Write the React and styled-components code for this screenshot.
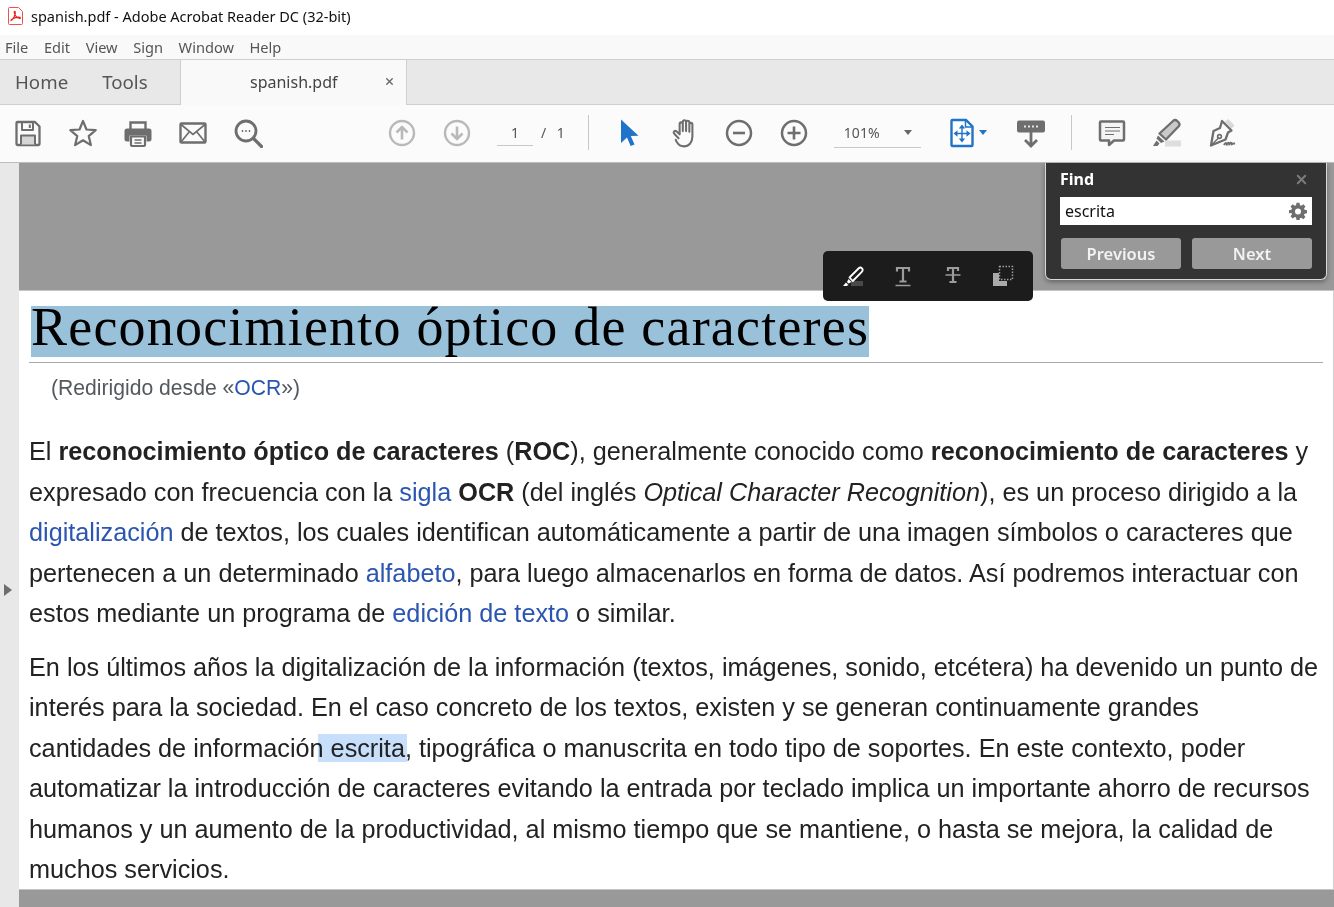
import React from 'react';
import styled, { createGlobalStyle } from 'styled-components';
import { X } from 'lucide-react';

const GlobalStyle = createGlobalStyle`
  html, body { margin: 0; padding: 0; height: 100%; overflow: hidden; background: #fff; }
  * { box-sizing: border-box; }
  #root { height: 100%; }
`;

const uiFont = `"Noto Sans", "Open Sans", "Liberation Sans", sans-serif`;

const Window = styled.div`
  width: 1334px;
  height: 907px;
  display: flex;
  flex-direction: column;
  overflow: hidden;
  position: relative;
  font-family: ${uiFont};
`;

const TitleBar = styled.div`
  height: 35px;
  flex: none;
  display: flex;
  align-items: center;
  gap: 7px;
  padding: 0 0 3px 8px;
  background: #fff;
  font-size: 14.5px;
  color: #111;
`;

const MenuBar = styled.div`
  height: 25px;
  flex: none;
  display: flex;
  align-items: center;
  gap: 15.6px;
  padding: 0 0 1px 5px;
  background: #f9f9f9;
  border-bottom: 1px solid #cfcfcf;
  font-size: 14.6px;
  color: #555;
`;

const TabBar = styled.div`
  height: 45px;
  flex: none;
  display: flex;
  background: #e8e8e8;
  border-bottom: 1px solid #cfcfcf;
`;

const NavTabs = styled.div`
  width: 180px;
  display: flex;
  align-items: center;
  gap: 34px;
  padding: 0 0 2px 15px;
  font-size: 18.7px;
  color: #555;
`;

const DocTab = styled.div`
  width: 227px;
  height: 45px;
  display: flex;
  align-items: center;
  padding: 0 0 2px 69px;
  gap: 46px;
  background: #f9f9f9;
  border-left: 1px solid #cfcfcf;
  border-right: 1px solid #cfcfcf;
  font-size: 16px;
  color: #444;
`;

const Toolbar = styled.div`
  height: 58px;
  flex: none;
  display: flex;
  align-items: center;
  padding-bottom: 2px;
  background: #fbfbfb;
  border-bottom: 1px solid #bdbdbd;
`;

const ToolGroup = styled.div`
  display: flex;
  align-items: center;
  gap: ${p => p.$gap || 0}px;
  margin-left: ${p => p.$left || 0}px;
`;

const Icon = styled.svg`
  width: ${p => p.$size || 30}px;
  height: ${p => p.$tall || p.$size || 30}px;
  flex: none;
  display: block;
`;

const PageField = styled.div`
  width: 36px;
  height: 26px;
  margin-left: 26px;
  display: flex;
  align-items: center;
  justify-content: center;
  border-bottom: 1px solid #c8c8c8;
  font-size: 14px;
  color: #555;
`;

const PageTotal = styled.div`
  margin-left: 8px;
  font-size: 14px;
  letter-spacing: 3px;
  word-spacing: 1px;
  color: #555;
  white-space: nowrap;
`;

const Divider = styled.div`
  width: 1px;
  height: 35px;
  background: #c8c8c8;
  margin-left: ${p => p.$left}px;
`;

const ZoomField = styled.div`
  width: 87px;
  height: 31px;
  margin-left: 25px;
  display: flex;
  align-items: center;
  justify-content: space-between;
  padding: 0 9px 0 10px;
  border-bottom: 1px solid #c8c8c8;
  font-size: 14px;
  color: #555;
`;

const Caret = styled.span`
  width: 0;
  height: 0;
  border-left: 4px solid transparent;
  border-right: 4px solid transparent;
  border-top: 5px solid ${p => p.$color || '#666'};
`;

const Workspace = styled.div`
  flex: 1;
  display: flex;
  min-height: 0;
`;

const SideRail = styled.div`
  width: 19px;
  flex: none;
  background: #e8e8e8;
  display: flex;
  align-items: center;
  padding-left: 4px;
`;

const RailArrow = styled.span`
  width: 0;
  height: 0;
  margin-top: 110px;
  border-top: 6px solid transparent;
  border-bottom: 6px solid transparent;
  border-left: 8px solid #6e6e6e;
`;

const Viewer = styled.div`
  flex: 1;
  display: flex;
  flex-direction: column;
  background: #999;
  padding-top: 127px;
`;

const Page = styled.div`
  height: 600px;
  background: #fff;
  border-top: 1px solid #c4c4c4;
  border-right: 1px solid #cfcfcf;
  border-bottom: 1px solid #c4c4c4;
  padding: 0 10px;
  font-family: "Liberation Sans", Arial, sans-serif;
  color: #222;
`;

const Heading = styled.h1`
  margin: 0;
  height: 72px;
  padding-top: 15px;
  border-bottom: 1px solid #a2a9b1;
  font-family: "Liberation Serif", "Times New Roman", serif;
  font-size: 54px;
  font-weight: 400;
  color: #000;
  white-space: nowrap;
`;

const TitleMark = styled.span`
  display: block;
  width: fit-content;
  margin-left: 2px;
  height: 51px;
  line-height: 43px;
  letter-spacing: 1.2px;
  background: #99c1da;
`;

const Redirect = styled.div`
  margin: 12px 0 0 22px;
  height: 26px;
  font-size: 21.15px;
  line-height: 26px;
  color: #54595d;
`;

const Paragraph = styled.p`
  margin: ${p => p.$top}px 0 0;
  font-size: 25.24px;
  line-height: 40.5px;
  white-space: nowrap;
`;

const WikiLink = styled.span`
  color: #2a55b0;
`;

const Hit = styled.span`
  background: #c8dffc;
  mix-blend-mode: multiply;
  margin: 0 -2px 0 -13px;
  padding: 0 2px 0 13px;
`;

const FindPanel = styled.div`
  position: absolute;
  left: 1045px;
  top: 163px;
  width: 282px;
  height: 117px;
  padding: 0 14px;
  background: #333;
  border: 1px solid #d8d8d8;
  border-top: none;
  border-radius: 0 0 6px 6px;
  box-shadow: 0 2px 5px rgba(0, 0, 0, 0.35);
  color: #fff;
`;

const FindHeader = styled.div`
  height: 34px;
  display: flex;
  align-items: center;
  justify-content: space-between;
  font-size: 16px;
  font-weight: 700;
  padding: 0 3px 2px 0;
`;

const FindInput = styled.div`
  height: 28px;
  display: flex;
  align-items: center;
  justify-content: space-between;
  padding: 0 5px;
  background: #fff;
  color: #111;
  font-size: 16px;
`;

const FindButtons = styled.div`
  display: flex;
  justify-content: space-between;
  margin-top: 13px;
  padding-left: 1px;
`;

const FindButton = styled.div`
  width: 120px;
  height: 31px;
  display: flex;
  align-items: center;
  justify-content: center;
  background: #999;
  border-radius: 3px;
  font-size: 16.5px;
  font-weight: 600;
  color: #f2f2f2;
`;

const SelectionBar = styled.div`
  position: absolute;
  left: 823px;
  top: 251px;
  width: 210px;
  height: 50px;
  display: flex;
  align-items: center;
  justify-content: space-between;
  padding: 0 15px;
  background: #1c1c1c;
  border-radius: 5px;
`;

const grey = '#6e6e6e';
const lite = '#b9b9b9';
const blue = '#1f73c9';
const dim = '#9c9c9c';

const AcrobatMark = () => (
  <Icon $size={16} $tall={18} viewBox="0 0 16 18">
    <path d="M1.500 .5h9l4 4v12a1 1 0 0 1-1 1h-12a1 1 0 0 1-1-1v-15a1 1 0 0 1 1-1z" fill="#fff" stroke="#f0504a" />
    <path d="M3 13.500c2-1 3.400-3.600 4.200-6.800.3-1.400-.1-2.600-.7-2.200-.6.5.1 2.600 1.200 4.400 1 1.500 2.300 2.500 3.800 2.500 1 0 1.200-.8.300-1-1.700-.4-5.400.5-7.500 1.700-1 .6-1.500 1.100-1.300 1.400z" fill="none" stroke="#e8231c" strokeWidth="1.200" />
  </Icon>
);

const SaveIcon = () => (
  <Icon viewBox="0 0 30 30" fill="none" stroke={grey} strokeWidth="2.300" strokeLinejoin="round">
    <path d="M3.500 5a1 1 0 0 1 1-1h17.500l4.500 4.500V26a1 1 0 0 1-1 1h-21a1 1 0 0 1-1-1z" />
    <path d="M9 4.500V12h11V4.500M16.800 6.500v3.500" strokeWidth="2" />
    <path d="M8 26.500V17.500h14v9" fill="#d6d6d6" strokeWidth="2" />
  </Icon>
);

const StarIcon = () => (
  <Icon viewBox="0 0 30 30" fill="none" stroke={grey} strokeWidth="2.200">
    <path d="M15 3l3.500 8.500 9.200.7-7 5.900 2.200 9-7.900-4.800-7.900 4.800 2.200-9-7-5.900 9.200-.7z" strokeLinejoin="round" />
  </Icon>
);

const PrintIcon = () => (
  <Icon viewBox="0 0 30 30">
    <path d="M7.500 11V4.500h15V11" fill="none" stroke={grey} strokeWidth="2.400" />
    <path d="M4 10.500h22a2.500 2.500 0 0 1 2.500 2.500v8a2.500 2.500 0 0 1-2.500 2.500h-2.500v-6h-17v6H4A2.500 2.500 0 0 1 1.500 21v-8A2.500 2.500 0 0 1 4 10.500z" fill={grey} />
    <path d="M8 18.500h14V27a1 1 0 0 1-1 1H9a1 1 0 0 1-1-1z" fill="none" stroke={grey} strokeWidth="2.200" />
    <path d="M11.500 22h7M11.500 25h7" stroke={grey} strokeWidth="1.300" />
  </Icon>
);

const MailIcon = () => (
  <Icon viewBox="0 0 30 30" fill="none" stroke={grey} strokeWidth="2.400">
    <rect x="2.500" y="5.500" width="25" height="19" rx="1" />
    <path d="M3 6.500L15 16.500 27 6.500M3 24L11.500 13.500M27 24L18.500 13.500" strokeWidth="1.700" />
  </Icon>
);

const SearchIcon = () => (
  <Icon viewBox="0 0 30 30" fill="none" stroke={grey} strokeWidth="2.800">
    <circle cx="13" cy="13" r="10" />
    <path d="M20.500 20.500l8 8" strokeWidth="3.200" strokeLinecap="round" />
    <path d="M8.800 13h1.400M12.300 13h1.400M15.800 13h1.400" strokeWidth="1.800" />
  </Icon>
);

const ArrowCircle = ({ down }) => (
  <Icon $size={28} viewBox="0 0 28 28" fill="none" stroke={lite} strokeWidth="2.400">
    <circle cx="14" cy="14" r="12" />
    {down
      ? <path d="M14 7.500v12M8.500 14.500l5.500 5.500 5.500-5.500" strokeWidth="2.600" />
      : <path d="M14 20.500v-12M8.500 13.500l5.500-5.500 5.500 5.500" strokeWidth="2.600" />}
  </Icon>
);

const ArrowCursor = () => (
  <Icon viewBox="0 0 30 30">
    <path d="M7 1.500v23.500l6-5.500 3.700 8.500 3.800-1.600-3.700-8.300 7.700-.4z" fill={blue} />
  </Icon>
);

const HandIcon = () => (
  <Icon viewBox="2.500 1 24 27.500" fill="none" stroke={grey} strokeWidth="1.900" strokeLinecap="round" strokeLinejoin="round">
    <path d="M9.500 19.500l-3.700-3.800c-1.900-1.700.3-3.800 2-2.300l2.700 2.600V6.500c0-2 2.900-2 2.900 0M13.400 13V4.500c0-2 3-2 3 0V13M16.400 13V5c0-2 3-2 3 0v8.500M19.400 13V7c0-2 2.800-2 2.800 0v11c0 5.500-3.300 9-7.800 9-3 0-5-1.500-6.500-4l-1-2" />
  </Icon>
);

const ZoomCircle = ({ plus }) => (
  <Icon viewBox="0 0 30 30" fill="none" stroke={grey} strokeWidth="2.500">
    <circle cx="15" cy="15" r="12" />
    <path d={plus ? 'M8.500 15h13M15 8.500v13' : 'M9 15h12'} strokeWidth="2.600" />
  </Icon>
);

const FitPageIcon = () => (
  <Icon $size={26} $tall={30} viewBox="0 0 26 30">
    <path d="M2.500 3a1 1 0 0 1 1-1h13.500l6.500 6.500V27a1 1 0 0 1-1 1h-19a1 1 0 0 1-1-1z" fill="#fff" stroke={blue} strokeWidth="2.400" />
    <path d="M16.500 2.500V9h6.500" fill="none" stroke={blue} strokeWidth="1.500" />
    <path d="M13 10v11M7.500 15.500h11" stroke={blue} strokeWidth="1.400" />
    <path d="M13 6.500l3.200 4h-6.400zM13 24.500l3.200-4h-6.400zM4.500 15.500l4-3.200v6.400zM21.500 15.500l-4-3.200v6.400z" fill={blue} />
  </Icon>
);

const ScrollModeIcon = () => (
  <Icon viewBox="0 0 30 30">
    <rect x="2" y="2.500" width="28" height="12" rx="2" fill={grey} />
    <path d="M9 7.500h2v2H9zM13 7.500h2v2h-2zM17 7.500h2v2h-2zM21 7.500h2v2h-2z" fill="#e4e4e4" />
    <path d="M16 13v15M10 22l6 6 6-6" fill="none" stroke={grey} strokeWidth="2.800" />
  </Icon>
);

const CommentIcon = () => (
  <Icon viewBox="0 0 30 30" fill="none" stroke={grey} strokeWidth="2.500">
    <path d="M4 3.500h22a1 1 0 0 1 1 1v17a1 1 0 0 1-1 1h-9l-5 4.500v-4.500H4a1 1 0 0 1-1-1v-17a1 1 0 0 1 1-1z" fill="#f4f4f4" strokeLinejoin="round" />
    <path d="M8 9.500h15M8 13h15M8 16.500h9" strokeWidth="1.200" />
  </Icon>
);

const HighlightIcon = () => (
  <Icon viewBox="0 0 30 30">
    <rect x="13" y="22.500" width="16" height="6" fill="#dedede" />
    <path d="M7.500 15.500L21 3c1.300-1.200 3-1.200 4.200 0l1.300 1.300c1.200 1.300 1.200 3 0 4.200L14 21.500z" fill="#c9c9c9" stroke={grey} strokeWidth="2.300" strokeLinejoin="round" />
    <path d="M6 17.500l6.500 6-3.500 1.500-4.500-4.500z" fill={grey} />
    <path d="M4.500 22.500l3 3-2 2.500H1z" fill={grey} />
  </Icon>
);

const SignIcon = () => (
  <Icon viewBox="0 0 30 30" fill="none" stroke={grey} strokeWidth="2.300" strokeLinejoin="round">
    <path d="M19.500 2.500l6.500 6.500" stroke="#d8d8d8" strokeWidth="4.500" />
    <path d="M15 3l9.500 9.500-3.500 2-2.500 7L4 27.500l2.500-14.500 6.500-3z" />
    <path d="M5 26.500l7-7" strokeWidth="1.400" />
    <circle cx="12.500" cy="18.500" r="1.900" strokeWidth="1.600" />
    <path d="M17 27c1.500-2.800 2.700-2.400 2.700-.2 1.400-2.800 2.500-2.400 2.500-.2 1.400-2.800 2.500-2.400 2.500-.2.800-.8 2-1 3.300-.6" strokeWidth="2" />
  </Icon>
);

const GearIcon = () => (
  <Icon $size={18} viewBox="0 0 24 24">
    <path
      fill={grey}
      fillRule="evenodd"
      d="M10 1h4l.6 3.200 1.800.8 2.700-1.900 2.800 2.800-1.900 2.700.8 1.800L24 11v4l-3.200.6-.8 1.800 1.900 2.700-2.800 2.800-2.700-1.900-1.800.8L14 24h-4l-.6-3.200-1.800-.8-2.700 1.900-2.800-2.800 1.900-2.700-.8-1.800L0 15v-4l3.200-.6.800-1.800-1.900-2.700 2.800-2.800 2.700 1.900 1.800-.8zM12 8.500a4 4 0 1 0 0 8 4 4 0 0 0 0-8z"
    />
  </Icon>
);

const MarkerSmall = () => (
  <Icon viewBox="0 0 30 30">
    <rect x="13" y="20" width="12" height="5" fill="#4a4a4a" />
    <path d="M11.500 16.500L20.500 7.500c1.200-1.200 2.500-1.200 3.500-.2s1 2.300-.2 3.500L14.800 20z" fill="#1c1c1c" stroke="#fff" strokeWidth="1.800" strokeLinejoin="round" />
    <path d="M10.500 18l3 3-3 1.500-1.500-1.500z" fill="#fff" />
    <path d="M8 21.500l2.500 2.500L8.500 25H5z" fill="#fff" />
  </Icon>
);

const TextUnderline = () => (
  <Icon viewBox="0 0 30 30" fill="none" stroke={dim}>
    <path d="M9 10.500V7h12v3.500M15 7v13M11.500 20.500h7" strokeWidth="2.200" />
    <path d="M7.500 24.500h15" strokeWidth="1.500" />
  </Icon>
);

const TextStrike = () => (
  <Icon viewBox="0 0 30 30" fill="none" stroke={dim}>
    <path d="M10 10V7h10v3M15 7v13.500M11.500 21h7" strokeWidth="2.200" />
    <path d="M7.500 14h15" strokeWidth="1.500" />
  </Icon>
);

const CopyRegion = () => (
  <Icon viewBox="0 0 30 30">
    <path d="M5 12h6v8h8v5H5z" fill="#aaa" />
    <rect x="11.500" y="5.500" width="13" height="13" fill="none" stroke={dim} strokeWidth="1.500" strokeDasharray="1.500 1.500" />
  </Icon>
);

export default function App() {
  return (
    <>
      <GlobalStyle />
      <Window>
        <TitleBar>
          <AcrobatMark />
          <span>spanish.pdf - Adobe Acrobat Reader DC (32-bit)</span>
        </TitleBar>
        <MenuBar>
          <span>File</span>
          <span>Edit</span>
          <span>View</span>
          <span>Sign</span>
          <span>Window</span>
          <span>Help</span>
        </MenuBar>
        <TabBar>
          <NavTabs>
            <span>Home</span>
            <span>Tools</span>
          </NavTabs>
          <DocTab>
            <span>spanish.pdf</span>
            <X size={11} strokeWidth={3} color="#666" />
          </DocTab>
        </TabBar>
        <Toolbar>
          <ToolGroup $gap={25} $left={13}>
            <SaveIcon />
            <StarIcon />
            <PrintIcon />
            <MailIcon />
            <SearchIcon />
          </ToolGroup>
          <ToolGroup $gap={27} $left={125}>
            <ArrowCircle />
            <ArrowCircle down />
          </ToolGroup>
          <PageField>1</PageField>
          <PageTotal>/ 1</PageTotal>
          <Divider $left={20} />
          <ToolGroup $gap={25} $left={25}>
            <ArrowCursor />
            <HandIcon />
            <ZoomCircle />
            <ZoomCircle plus />
          </ToolGroup>
          <ZoomField>
            <span>101%</span>
            <Caret />
          </ZoomField>
          <ToolGroup $gap={4} $left={28}>
            <FitPageIcon />
            <Caret $color={blue} />
          </ToolGroup>
          <ToolGroup $left={28}>
            <ScrollModeIcon />
          </ToolGroup>
          <Divider $left={26} />
          <ToolGroup $gap={25} $left={25}>
            <CommentIcon />
            <HighlightIcon />
            <SignIcon />
          </ToolGroup>
        </Toolbar>
        <Workspace>
          <SideRail>
            <RailArrow />
          </SideRail>
          <Viewer>
            <Page>
              <Heading>
                <TitleMark>Reconocimiento óptico de caracteres</TitleMark>
              </Heading>
              <Redirect>
                (Redirigido desde «<WikiLink>OCR</WikiLink>»)
              </Redirect>
              <Paragraph $top={30}>
                El <b>reconocimiento óptico de caracteres</b> (<b>ROC</b>), generalmente conocido como <b>reconocimiento de caracteres</b> y<br />
                expresado con frecuencia con la <WikiLink>sigla</WikiLink> <b>OCR</b> (del inglés <i>Optical Character Recognition</i>), es un proceso dirigido a la<br />
                <WikiLink>digitalización</WikiLink> de textos, los cuales identifican automáticamente a partir de una imagen símbolos o caracteres que<br />
                pertenecen a un determinado <WikiLink>alfabeto</WikiLink>, para luego almacenarlos en forma de datos. Así podremos interactuar con<br />
                estos mediante un programa de <WikiLink>edición de texto</WikiLink> o similar.
              </Paragraph>
              <Paragraph $top={13}>
                En los últimos años la digitalización de la información (textos, imágenes, sonido, etcétera) ha devenido un punto de<br />
                interés para la sociedad. En el caso concreto de los textos, existen y se generan continuamente grandes<br />
                cantidades de información <Hit>escrita</Hit>, tipográfica o manuscrita en todo tipo de soportes. En este contexto, poder<br />
                automatizar la introducción de caracteres evitando la entrada por teclado implica un importante ahorro de recursos<br />
                humanos y un aumento de la productividad, al mismo tiempo que se mantiene, o hasta se mejora, la calidad de<br />
                muchos servicios.
              </Paragraph>
            </Page>
          </Viewer>
        </Workspace>
        <SelectionBar>
          <MarkerSmall />
          <TextUnderline />
          <TextStrike />
          <CopyRegion />
        </SelectionBar>
        <FindPanel>
          <FindHeader>
            <span>Find</span>
            <X size={15} strokeWidth={3} color="#7d7d7d" />
          </FindHeader>
          <FindInput>
            <span>escrita</span>
            <GearIcon />
          </FindInput>
          <FindButtons>
            <FindButton>Previous</FindButton>
            <FindButton>Next</FindButton>
          </FindButtons>
        </FindPanel>
      </Window>
    </>
  );
}
